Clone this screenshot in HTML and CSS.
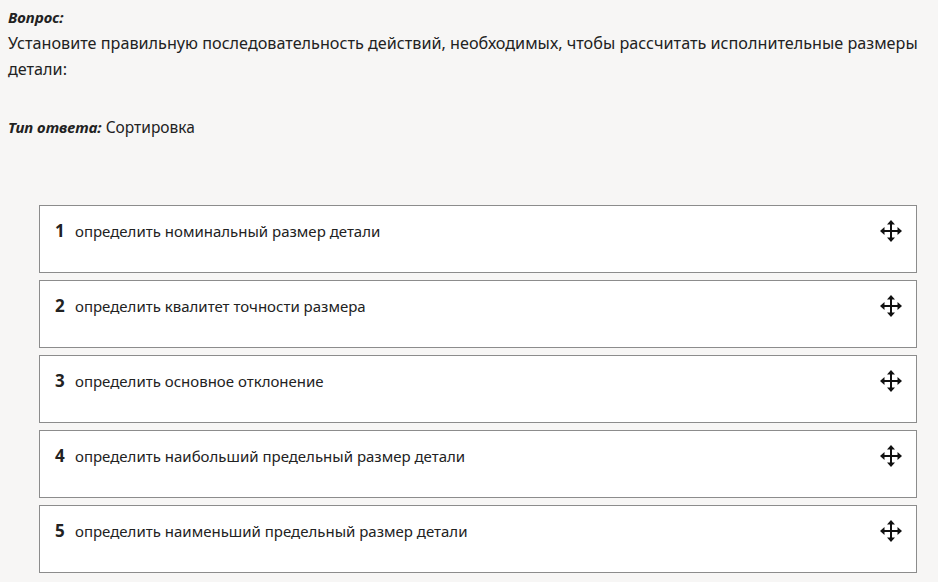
FILE: index.html
```html
<!DOCTYPE html>
<html lang="ru">

<head>
    <meta charset="UTF-8">
    <meta name="viewport" content="width=device-width, initial-scale=1.0">
    <title>Вопрос</title>
    <link rel="stylesheet" href="styles.css">
</head>

<body>
    <div class="question">
        <div class="label">Вопрос:</div>
        <div class="question-text">Установите правильную последовательность действий, необходимых, чтобы рассчитать исполнительные размеры детали:</div>
    </div>
    <div class="answer-type">
        <span class="label">Тип ответа:</span> Сортировка
    </div>

    <ol class="sort-list">
        <li class="sort-item">
            <span class="sort-num">1</span>
            <span class="sort-text">определить номинальный размер детали</span>
            <svg class="move-icon" viewBox="0 0 22 22" width="22" height="22"><path d="M11 2v18M2 11h18" stroke="#111" stroke-width="2"/><path d="M11 0l-4 4.5h8zM11 22l-4-4.5h8zM0 11l4.5-4v8zM22 11l-4.5-4v8z" fill="#111"/></svg>
        </li>
        <li class="sort-item">
            <span class="sort-num">2</span>
            <span class="sort-text">определить квалитет точности размера</span>
            <svg class="move-icon" viewBox="0 0 22 22" width="22" height="22"><path d="M11 2v18M2 11h18" stroke="#111" stroke-width="2"/><path d="M11 0l-4 4.5h8zM11 22l-4-4.5h8zM0 11l4.5-4v8zM22 11l-4.5-4v8z" fill="#111"/></svg>
        </li>
        <li class="sort-item">
            <span class="sort-num">3</span>
            <span class="sort-text">определить основное отклонение</span>
            <svg class="move-icon" viewBox="0 0 22 22" width="22" height="22"><path d="M11 2v18M2 11h18" stroke="#111" stroke-width="2"/><path d="M11 0l-4 4.5h8zM11 22l-4-4.5h8zM0 11l4.5-4v8zM22 11l-4.5-4v8z" fill="#111"/></svg>
        </li>
        <li class="sort-item">
            <span class="sort-num">4</span>
            <span class="sort-text">определить наибольший предельный размер детали</span>
            <svg class="move-icon" viewBox="0 0 22 22" width="22" height="22"><path d="M11 2v18M2 11h18" stroke="#111" stroke-width="2"/><path d="M11 0l-4 4.5h8zM11 22l-4-4.5h8zM0 11l4.5-4v8zM22 11l-4.5-4v8z" fill="#111"/></svg>
        </li>
        <li class="sort-item">
            <span class="sort-num">5</span>
            <span class="sort-text">определить наименьший предельный размер детали</span>
            <svg class="move-icon" viewBox="0 0 22 22" width="22" height="22"><path d="M11 2v18M2 11h18" stroke="#111" stroke-width="2"/><path d="M11 0l-4 4.5h8zM11 22l-4-4.5h8zM0 11l4.5-4v8zM22 11l-4.5-4v8z" fill="#111"/></svg>
        </li>
    </ol>
</body>

</html>
```

FILE: styles.css
```css
body {
    margin: 0;
    padding: 4px 8px 0 8px;
    background-color: #f7f6f5;
    color: #222;
    font-family: 'Noto Sans', 'Open Sans', sans-serif;
    font-size: 15.5px;
    line-height: 26px;
}

.label {
    font-style: italic;
    font-weight: bold;
    font-size: 15px;
}

.question-text {
    font-size: 16.2px;
    padding-right: 4px;
}

.answer-type {
    margin-top: 32px;
}

.sort-list {
    list-style: none;
    margin: 65px 13px 0 31px;
    padding: 0;
    display: flex;
    flex-direction: column;
    gap: 7px;
}

.sort-item {
    height: 68px;
    box-sizing: border-box;
    background-color: #fff;
    border: 1px solid #8c8c8c;
    display: flex;
    align-items: flex-start;
    padding: 12px 14px 0 15px;
}

.sort-num {
    font-weight: bold;
    font-size: 17px;
    width: 20px;
}

.sort-text {
    flex: 1;
    font-size: 15px;
}

.move-icon {
    margin-top: 2px;
}
```
